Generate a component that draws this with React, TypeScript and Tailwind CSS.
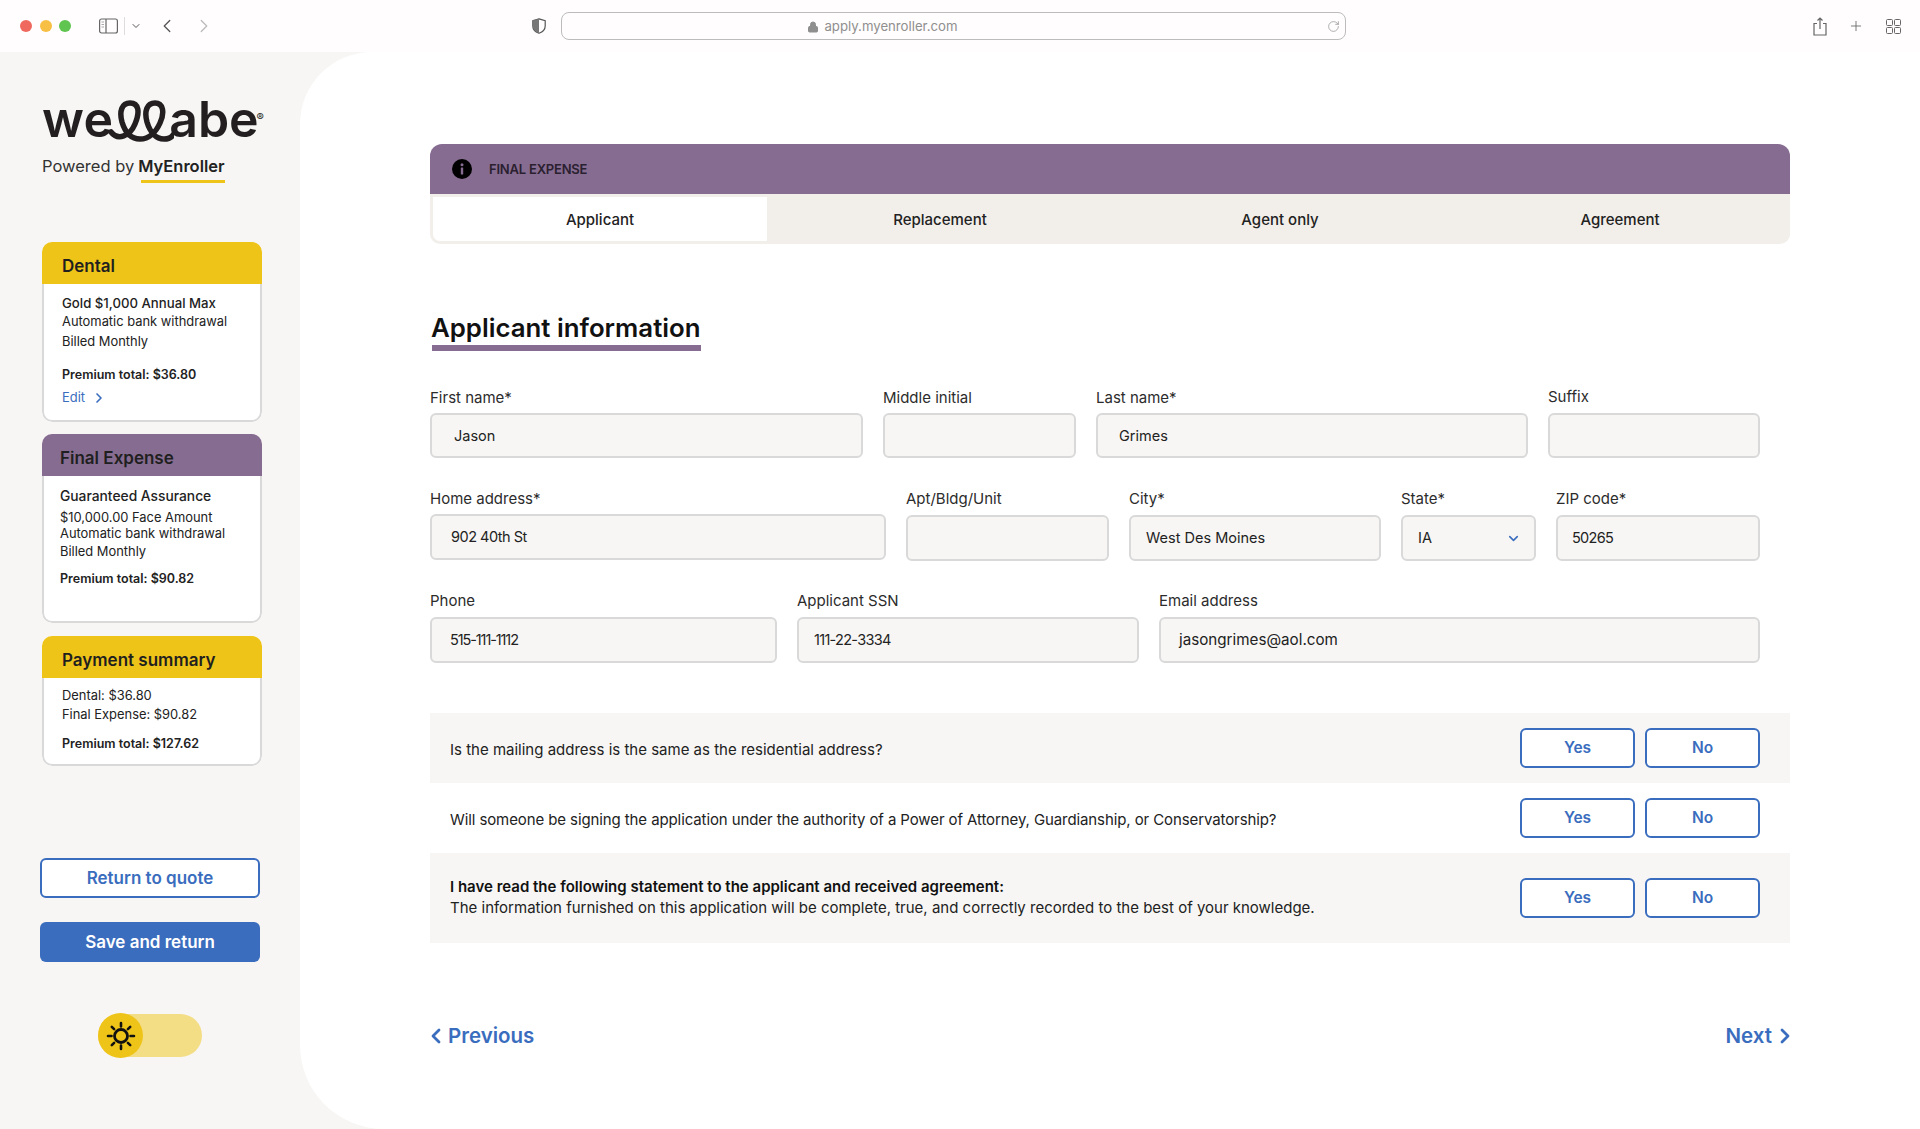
import React from "react";
import { ChevronDown, ChevronLeft, ChevronRight, Lock, Plus, RotateCw } from "lucide-react";

function Field({ label, value, w, mb, h, pl, labelCls, valueCls, extra }: { label: string; value?: string; w: string; mb: string; h: string; pl: string; labelCls?: string; valueCls?: string; extra?: React.ReactNode }) {
  return (
    <div className={`flex flex-col ${w}`}>
      <div className={`h-[20px] leading-[20px] text-[15px] text-[#2c2c2c] ${labelCls ?? ""}`}>{label}</div>
      <div className={`${mb} ${h} ${pl} flex items-center justify-between rounded-[6px] border-2 border-[#d9d9d9] bg-[#f7f6f4] text-[14.5px] text-[#222]`}>
        <span className={valueCls}>{value}</span>
        {extra}
      </div>
    </div>
  );
}

function YesNo() {
  return (
    <div className="flex gap-[10px]">
      <button className="h-[40px] w-[115px] rounded-[6px] border-2 border-[#3a6dbe] bg-white text-[15.5px] font-semibold text-[#3a6dbe]">Yes</button>
      <button className="h-[40px] w-[115px] rounded-[6px] border-2 border-[#3a6dbe] bg-white text-[15.5px] font-semibold text-[#3a6dbe]">No</button>
    </div>
  );
}

function Line({ children, cls }: { children: React.ReactNode; cls: string }) {
  return <div className={`h-[16px] leading-[16px] whitespace-nowrap text-[#222] ${cls}`}>{children}</div>;
}

function Card({ title, color, h, tx, children }: { title: string; color: string; h: string; tx: string; children: React.ReactNode }) {
  return (
    <div className={`w-[220px] ${h} flex flex-col overflow-hidden rounded-[10px] bg-white`}>
      <div className={`h-[42px] shrink-0 ${color} ${tx} flex items-center pt-[8px] text-[17px] font-semibold text-[#1f1f1f]`}>{title}</div>
      <div className="flex flex-1 flex-col rounded-b-[10px] border-2 border-t-0 border-[#d9d9d9]">{children}</div>
    </div>
  );
}

function Sidebar() {
  return (
    <aside className="flex w-[300px] shrink-0 flex-col bg-[#f7f6f4] pl-[42px] pt-[42px]">
      <div className="relative flex h-[50px] w-[222px] items-end text-[#231f20]">
        <span className="text-[50px] leading-[50px] font-semibold tracking-[0.2px]">we</span>
        <svg className="-mx-[5px] mb-[1px] h-[44px] w-[66px] shrink-0" viewBox="0 0 66 44" fill="none" stroke="#231f20" strokeWidth="5.5" strokeLinecap="round">
          <path d="M3 33 C10 42 22 37 27 25 C32 13 31 4 22 4 C14 4 11 12 14 23 C17 33 23 40 32 40 C41 40 48 33 52 24 C57 13 55 4 47 4 C39 4 36 12 39 23 C42 33 48 40 56 40 C60 40 63 39 65 36" />
        </svg>
        <span className="text-[50px] leading-[50px] font-semibold tracking-[0px]">abe</span>
        <span className="absolute right-0 top-[18px] text-[11px] leading-none">®</span>
      </div>
      <div className="mt-[12px] flex h-[20px] items-center whitespace-nowrap text-[16.5px] leading-[20px] text-[#333]">
        <span>Powered by</span>
        <span className="ml-[4px] font-semibold text-[#222]">MyEnroller</span>
      </div>
      <div className="ml-[99px] mt-[4px] h-[3px] w-[84px] bg-[#efc419]" />

      <div className="mt-[59px] flex flex-col">
        <Card title="Dental" color="bg-[#efc419]" h="h-[180px]" tx="pl-[20px]">
          <div className="flex flex-col pl-[18px] pt-[11px]">
            <Line cls="text-[13.2px] font-medium">Gold $1,000 Annual Max</Line>
            <Line cls="mt-[3px] text-[12.9px]">Automatic bank withdrawal</Line>
            <Line cls="mt-[4px] text-[12.9px]">Billed Monthly</Line>
            <Line cls="mt-[17px] text-[12.5px] font-semibold">Premium total: $36.80</Line>
            <div className="mt-[7px] flex h-[16px] items-center text-[12.9px] text-[#3a6dbe]">
              Edit
              <ChevronRight className="ml-[6px] h-[16px] w-[16px]" strokeWidth={2.5} />
            </div>
          </div>
        </Card>
        <div className="h-[12px]" />
        <Card title="Final Expense" color="bg-[#876c91]" h="h-[189px]" tx="pl-[18px]">
          <div className="flex flex-col pl-[16px] pt-[12px]">
            <Line cls="text-[13.8px] font-medium">Guaranteed Assurance</Line>
            <Line cls="mt-[6px] text-[12.9px]">$10,000.00 Face Amount</Line>
            <Line cls="text-[12.9px]">Automatic bank withdrawal</Line>
            <Line cls="mt-[2px] text-[12.9px]">Billed Monthly</Line>
            <Line cls="mt-[11px] text-[12.5px] font-semibold">Premium total: $90.82</Line>
          </div>
        </Card>
        <div className="h-[13px]" />
        <Card title="Payment summary" color="bg-[#efc419]" h="h-[130px]" tx="pl-[20px]">
          <div className="flex flex-col pl-[18px] pt-[10px]">
            <Line cls="text-[12.9px]">Dental: $36.80</Line>
            <Line cls="mt-[3px] text-[12.9px]">Final Expense: $90.82</Line>
            <Line cls="mt-[13px] text-[12.5px] font-semibold">Premium total: $127.62</Line>
          </div>
        </Card>
      </div>

      <button className="-ml-[2px] mt-[92px] h-[40px] w-[220px] rounded-[6px] border-2 border-[#3a6dbe] bg-white pt-[2px] text-[17px] font-semibold text-[#3a6dbe]">Return to quote</button>
      <button className="-ml-[2px] mt-[24px] h-[40px] w-[220px] rounded-[6px] bg-[#3a6dbe] pt-[2px] text-[17px] font-semibold text-white">Save and return</button>

      <div className="ml-[56px] mt-[52px] flex h-[43px] w-[104px] items-center rounded-full bg-[#f3dd85]">
        <div className="-my-px flex h-[45px] w-[45px] items-center justify-center rounded-full bg-[#efc419]">
          <svg width="30" height="30" viewBox="0 0 30 30" fill="none" stroke="#111" strokeLinecap="round">
            <circle cx="15" cy="15" r="6.5" strokeWidth="2.8" />
            <path strokeWidth="2.6" d="M15 2v3.5M15 24.5V28M2 15h3.5M24.5 15H28M5.8 5.8l2.3 2.3M21.9 21.9l2.3 2.3M5.8 24.2l2.3-2.3M21.9 8.1l2.3-2.3" />
          </svg>
        </div>
      </div>
    </aside>
  );
}

function TopBar() {
  return (
    <header className="flex h-[52px] shrink-0 items-center bg-[#fffdfd]">
      <div className="ml-[20px] flex gap-[8px]">
        <span className="h-[12px] w-[12px] rounded-full bg-[#f0695f]" />
        <span className="-ml-[0.5px] h-[12px] w-[12px] rounded-full bg-[#f8bf45]" />
        <span className="-ml-[0.5px] h-[12px] w-[12px] rounded-full bg-[#5fc450]" />
      </div>
      <svg className="ml-[28px]" width="19" height="16" viewBox="0 0 19 16" fill="none" stroke="#666" strokeWidth="1.2">
        <rect x="0.6" y="1" width="17.8" height="14" rx="2" />
        <path d="M7 1v14" />
        <path d="M2.5 4h2.5M2.5 6.5h2.5M2.5 9h2.5" stroke="#aaa" />
      </svg>
      <span className="ml-[6px] h-[18px] w-px bg-[#ddd]" />
      <ChevronDown className="ml-[5px] text-[#555]" size={12} strokeWidth={2} />
      <ChevronLeft className="ml-[14px] text-[#555]" size={22} strokeWidth={1.4} />
      <ChevronRight className="ml-[15px] text-[#bbb]" size={22} strokeWidth={1.4} />
      <svg className="ml-[317px]" width="14" height="16" viewBox="0 0 14 16">
        <path d="M7 .8 13.2 2.6V8c0 3.5-2.7 6-6.200 7.200C3.500 14 .8 11.500 .8 8V2.600Z" fill="none" stroke="#555" strokeWidth="1.2" />
        <path d="M7 .8 .8 2.600V8c0 3.500 2.700 6 6.200 7.200Z" fill="#777" />
      </svg>
      <div className="relative ml-[15px] flex h-[28px] w-[785px] items-center justify-center rounded-[8px] border border-[#bcbcbc] pr-[142px] pt-[1px] text-[13.2px] text-[#8f8f8f]">
        <Lock className="mr-[5px] h-[12px] w-[12px] fill-[#8f8f8f]" strokeWidth={2} />
        apply.myenroller.com
        <RotateCw className="absolute right-[5px] h-[13px] w-[13px] text-[#888]" strokeWidth={1.2} />
      </div>
      <svg className="ml-[467px]" width="14" height="19" viewBox="0 0 14 19" fill="none" stroke="#666" strokeWidth="1.2">
        <path d="M4 6.500H1v11.500h12V6.500h-3" />
        <path d="M7 12V1M4.500 3.500 7 1l2.500 2.500" />
      </svg>
      <Plus className="ml-[21px] text-[#666]" size={16} strokeWidth={1.3} />
      <svg className="ml-[22px]" width="15" height="15" viewBox="0 0 15 15" fill="none" stroke="#666" strokeWidth="1">
        <rect x="0.5" y="0.500" width="6" height="6" rx="1" />
        <rect x="8.500" y="0.500" width="6" height="6" rx="1" />
        <rect x="0.5" y="8.500" width="6" height="6" rx="1" />
        <rect x="8.500" y="8.500" width="6" height="6" rx="1" />
      </svg>
    </header>
  );
}

function Main() {
  return (
    <main className="flex-1 rounded-tl-[72px] rounded-bl-[84px] bg-white pl-[130px] pr-[130px] pt-[92px]">
      <div className="flex h-[50px] items-center rounded-t-[12px] bg-[#876c91] pl-[22px]">
        <svg width="20" height="20" viewBox="0 0 20 20">
          <circle cx="10" cy="10" r="10" fill="#000" />
          <rect x="8.800" y="8.500" width="2.400" height="7" rx="0.600" fill="#876c91" />
          <circle cx="10" cy="5.800" r="1.500" fill="#876c91" />
        </svg>
        <span className="ml-[17px] pt-[2px] text-[13px] font-semibold tracking-[-0.2px] text-[#2a2030]">FINAL EXPENSE</span>
      </div>
      <div className="grid h-[50px] grid-cols-4 overflow-hidden rounded-b-[10px] bg-[#f2efeb] text-[15px] font-medium text-[#222]">
        <div className="m-[3px] flex items-center justify-center rounded-bl-[7px] bg-white pt-[2px]">Applicant</div>
        <div className="flex items-center justify-center pt-[2px]">Replacement</div>
        <div className="flex items-center justify-center pt-[2px]">Agent only</div>
        <div className="flex items-center justify-center pt-[2px]">Agreement</div>
      </div>

      <h1 className="ml-[2px] mt-[67px] w-[269px] -indent-px whitespace-nowrap border-b-[6px] border-[#876c91] text-[25.8px] leading-[34px] font-semibold text-[#111]">Applicant information</h1>

      <div className="mt-[37px] flex gap-[20px]">
        <Field label="First name*" value="Jason" w="w-[433px]" mb="mt-[5px]" h="h-[45px]" pl="pl-[22px]" />
        <Field label="Middle initial" w="w-[193px]" mb="mt-[5px]" h="h-[45px]" pl="pl-[22px]" />
        <Field label="Last name*" value="Grimes" w="w-[432px]" mb="mt-[5px]" h="h-[45px]" pl="pl-[21px]" />
        <Field label="Suffix" w="w-[212px]" mb="mt-[5px]" h="h-[45px]" pl="pl-[22px]" labelCls="-mt-px mb-px" />
      </div>

      <div className="mt-[31px] flex gap-[20px]">
        <Field label="Home address*" value="902 40th St" valueCls="tracking-[-0.5px]" w="w-[456px]" mb="mt-[5px]" h="h-[46px]" pl="pl-[19px]" />
        <Field label="Apt/Bldg/Unit" w="w-[203px]" mb="mt-[6px]" h="h-[46px]" pl="pl-[16px]" />
        <Field label="City*" value="West Des Moines" w="w-[252px]" mb="mt-[6px]" h="h-[46px]" pl="pl-[15px]" />
        <Field
          label="State*"
          value="IA"
          w="w-[135px]"
          mb="mt-[6px]"
          h="h-[46px]"
          pl="pl-[15px] pr-[13px]"
          extra={<ChevronDown className="h-[15px] w-[15px] text-[#3a6dbe]" strokeWidth={2.5} />}
        />
        <Field label="ZIP code*" value="50265" valueCls="tracking-[-0.7px]" w="w-[204px]" mb="mt-[6px]" h="h-[46px]" pl="pl-[14px]" />
      </div>

      <div className="mt-[30px] flex gap-[20px]">
        <Field label="Phone" value="515-111-1112" valueCls="tracking-[-1.1px]" w="w-[347px]" mb="mt-[6px]" h="h-[46px]" pl="pl-[18px]" />
        <Field label="Applicant SSN" value="111-22-3334" valueCls="tracking-[-0.7px]" w="w-[342px]" mb="mt-[6px]" h="h-[46px]" pl="pl-[15px]" />
        <Field label="Email address" value="jasongrimes@aol.com" valueCls="text-[15.2px]" w="w-[601px]" mb="mt-[6px]" h="h-[46px]" pl="pl-[18px]" />
      </div>

      <div className="mt-[50px] flex flex-col text-[15px] text-[#222]">
        <div className="flex h-[70px] items-center justify-between bg-[#f7f6f4] pl-[20px] pr-[30px]">
          <span className="pt-[5px]">Is the mailing address is the same as the residential address?</span>
          <YesNo />
        </div>
        <div className="flex h-[70px] items-center justify-between pl-[20px] pr-[30px]">
          <span className="pt-[5px] tracking-[-0.1px]">Will someone be signing the application under the authority of a Power of Attorney, Guardianship, or Conservatorship?</span>
          <YesNo />
        </div>
        <div className="flex h-[90px] items-center justify-between bg-[#f7f6f4] pl-[20px] pr-[30px]">
          <div className="flex flex-col pb-[2px] leading-[21px]">
            <span className="font-semibold text-[#111]">I have read the following statement to the applicant and received agreement:</span>
            <span>The information furnished on this application will be complete, true, and correctly recorded to the best of your knowledge.</span>
          </div>
          <YesNo />
        </div>
      </div>

      <div className="mt-[77px] flex h-[30px] items-center justify-between pt-[2px] text-[20.5px] font-semibold text-[#3a6dbe]">
        <div className="flex items-center">
          <ChevronLeft className="-ml-[6px] h-[24px] w-[24px]" strokeWidth={2.8} />
          <span>Previous</span>
        </div>
        <div className="flex items-center">
          <span>Next</span>
          <ChevronRight className="-mr-[7px] ml-[1px] h-[24px] w-[24px]" strokeWidth={2.8} />
        </div>
      </div>
    </main>
  );
}

export default function App() {
  return (
    <div className="flex h-[1129px] w-[1920px] flex-col overflow-hidden bg-[#f7f6f4] font-['Inter',sans-serif]">
      <TopBar />
      <div className="flex flex-1">
        <Sidebar />
        <Main />
      </div>
    </div>
  );
}
